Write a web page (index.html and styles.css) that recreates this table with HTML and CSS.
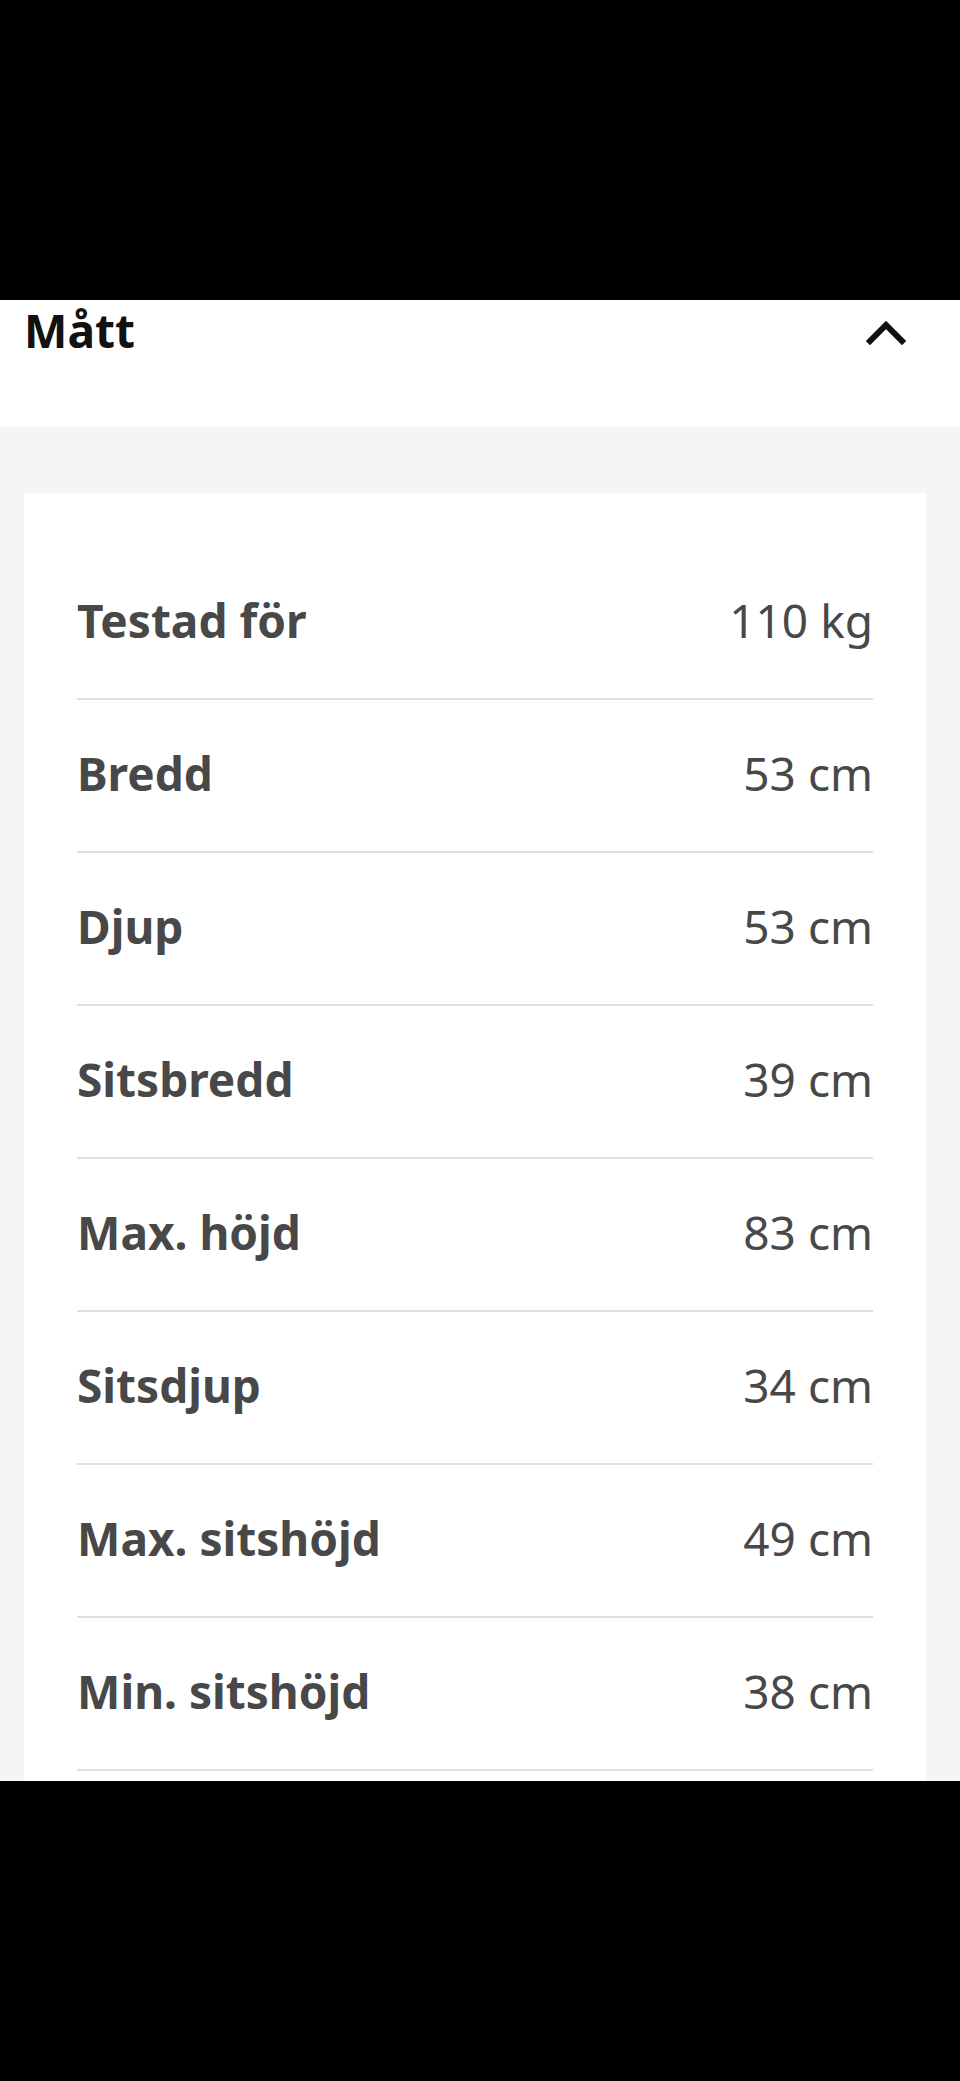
FILE: index.html
```html
<!DOCTYPE html>
<html lang="sv">
<head>
  <meta charset="UTF-8" />
  <title>Mått</title>
  <link rel="stylesheet" href="styles.css">
</head>
<body>

<div class="bar-top"></div>

<div class="accordion-head">
  <h2>Mått</h2>
  <svg class="chevron" width="40" height="24" viewBox="0 0 40 24">
    <polyline points="4,20 20,4 36,20" fill="none" stroke="#111" stroke-width="6" stroke-linecap="square" />
  </svg>
</div>

<div class="panel">
  <div class="card">
    <div class="row"><span class="label">Testad för</span><span class="value">110 kg</span></div>
    <div class="row"><span class="label">Bredd</span><span class="value">53 cm</span></div>
    <div class="row"><span class="label">Djup</span><span class="value">53 cm</span></div>
    <div class="row"><span class="label">Sitsbredd</span><span class="value">39 cm</span></div>
    <div class="row"><span class="label">Max. höjd</span><span class="value">83 cm</span></div>
    <div class="row"><span class="label">Sitsdjup</span><span class="value">34 cm</span></div>
    <div class="row"><span class="label">Max. sitshöjd</span><span class="value">49 cm</span></div>
    <div class="row"><span class="label">Min. sitshöjd</span><span class="value">38 cm</span></div>
  </div>
</div>

<div class="bar-bottom"></div>

</body>
</html>
```

FILE: styles.css
```css
* {
  box-sizing: border-box;
}
body {
  margin: 0;
  background: #000;
  font-family: "Noto Sans", "Open Sans", sans-serif;
}

.bar-top {
  height: 300px;
  background: #000;
}

.accordion-head {
  height: 127px;
  background: #fff;
  padding: 7px 54px 0 24px;
  display: flex;
  justify-content: space-between;
  align-items: flex-start;
}

.accordion-head h2 {
  margin: 0;
  font-size: 46px;
  line-height: 1;
  font-weight: 700;
  color: #111;
}

.chevron {
  margin-top: 14px;
}

.panel {
  height: 1354px;
  overflow: hidden;
  background: #f5f5f5;
  padding: 66px 34px 0 24px;
}

.card {
  background: #fff;
  padding: 54px 53px;
}

.row {
  height: 153px;
  display: flex;
  justify-content: space-between;
  align-items: center;
  border-bottom: 2px solid #dfdfdf;
  font-size: 46px;
  color: #484848;
  padding-bottom: 6px;
}

.label {
  font-weight: 700;
}

.value {
  font-weight: 400;
}

.bar-bottom {
  height: 300px;
  background: #000;
}
```
